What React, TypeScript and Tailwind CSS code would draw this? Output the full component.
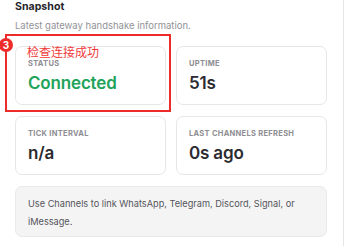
import React from "react";

function Card({ label, value, green }: { label: string; value: string; green?: boolean }) {
  return (
    <div className="h-[59px] rounded-[7px] border border-[#e7e7e9] bg-white pl-[12px] pt-[12px]">
      <div className="text-[7.5px] leading-[10px] font-bold tracking-[0.04em] text-[#8d8d92] uppercase">{label}</div>
      <div
        className={
          "mt-[3px] text-[17px] leading-[22px] font-semibold tracking-[-0.01em] " +
          (green ? "text-[#22a35a]" : "text-[#2b2b30]")
        }
      >
        {value}
      </div>
    </div>
  );
}

export default function App() {
  return (
    <div
      className="relative w-[346px] h-[246px] overflow-hidden bg-white"
      style={{ fontFamily: "Inter, 'Noto Sans', sans-serif" }}
    >
      <div className="w-[344px] h-[246px] border-r border-[#e6e6e8] pl-[15px] pr-[16px]">
        <div className="text-[10.6px] leading-[14px] font-bold text-[#26262b]">Snapshot</div>
        <div className="mt-[5px] text-[9.5px] leading-[14px] text-[#929297]">Latest gateway handshake information.</div>
        <div className="mt-[13px] grid grid-cols-2 gap-x-[10px] gap-y-[11px]">
          <Card label="Status" value="Connected" green />
          <Card label="Uptime" value="51s" />
          <Card label="Tick Interval" value="n/a" />
          <Card label="Last Channels Refresh" value="0s ago" />
        </div>
        <div className="mt-[11px] h-[51px] rounded-[7px] border border-[#e9e9eb] bg-[#f4f4f5] pl-[12px] pt-[8px] text-[9.2px] leading-[17.5px] text-[#55555a]">
          Use Channels to link WhatsApp, Telegram, Discord, Signal, or
          <br />
          iMessage.
        </div>
      </div>

      {/* annotation overlay */}
      <div className="absolute left-[5px] top-[34px] w-[166px] h-[78px] border-2 border-[#ee2b2b]" />
      <div
        className="absolute left-[27px] top-[46px] text-[12px] leading-[12px] text-[#f03a3a]"
        style={{ fontFamily: "'Noto Sans CJK SC', sans-serif" }}
      >
        检查连接成功
      </div>
      <div className="absolute left-[-1px] top-[38px] w-[14px] h-[14px] rounded-full bg-[#ee2b2b] flex items-center justify-center text-white text-[10px] font-bold leading-none">
        3
      </div>
    </div>
  );
}
